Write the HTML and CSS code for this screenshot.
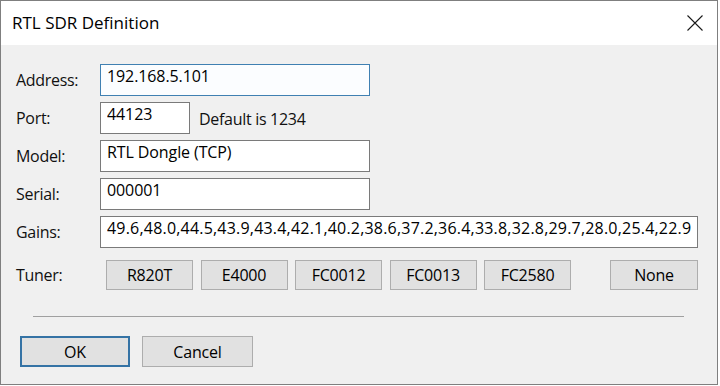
FILE: index.html
```html
<!DOCTYPE html>
<html lang="en">
<head>
    <meta charset="UTF-8">
    <title>RTL SDR Definition</title>
    <link rel="stylesheet" href="styles.css">
</head>
<body>
    <!-- Dialog window -->
    <div class="dialog">
        <div class="titlebar">
            <span class="title">RTL SDR Definition</span>
            <button class="close" aria-label="Close">
                <svg width="16" height="16" viewBox="0 0 16 16">
                    <path d="M0.5 0.5 L15.5 15.5 M15.5 0.5 L0.5 15.5" stroke="#1a1a1a" stroke-width="1.1" fill="none"/>
                </svg>
            </button>
        </div>

        <div class="dialog-body">
            <form class="fields" onsubmit="return false">
                <label class="field-label" for="address">Address:</label>
                <div class="field"><input id="address" class="edit edit-wide edit-focus" value="192.168.5.101"></div>

                <label class="field-label" for="port">Port:</label>
                <div class="field">
                    <input id="port" class="edit edit-port" value="44123">
                    <span class="hint">Default is 1234</span>
                </div>

                <label class="field-label" for="model">Model:</label>
                <div class="field"><input id="model" class="edit edit-wide" value="RTL Dongle (TCP)"></div>

                <label class="field-label" for="serial">Serial:</label>
                <div class="field"><input id="serial" class="edit edit-wide" value="000001"></div>

                <label class="field-label" for="gains">Gains:</label>
                <div class="field"><input id="gains" class="edit edit-full" value="49.6,48.0,44.5,43.9,43.4,42.1,40.2,38.6,37.2,36.4,33.8,32.8,29.7,28.0,25.4,22.9,20.7,19.7,16.6,15.7,14.4,12.5,8.7,7.7,3.7,2.7,1.4,0.9,0.0"></div>

                <span class="field-label tuner-label">Tuner:</span>
                <div class="tuners">
                    <button class="btn tuner-btn">R820T</button>
                    <button class="btn tuner-btn">E4000</button>
                    <button class="btn tuner-btn">FC0012</button>
                    <button class="btn tuner-btn">FC0013</button>
                    <button class="btn tuner-btn">FC2580</button>
                    <button class="btn tuner-btn tuner-none">None</button>
                </div>
            </form>

            <hr class="separator">

            <div class="actions">
                <button class="btn action-btn btn-default">OK</button>
                <button class="btn action-btn">Cancel</button>
            </div>
        </div>
    </div>
</body>
</html>
```

FILE: styles.css
```css
/* Page */
body {
    margin: 0;
    background-color: #ffffff;
    font-family: 'Open Sans', sans-serif;
    font-size: 16px;
    letter-spacing: -0.3px;
    color: #000;
}

/* Dialog window */
.dialog {
    width: 718px;
    height: 385px;
    box-sizing: border-box;
    border: 1px solid #7f7f7f;
    background-color: #f0f0f0;
    display: flex;
    flex-direction: column;
}

.titlebar {
    height: 44px;
    background-color: #ffffff;
    display: flex;
    align-items: center;
    justify-content: space-between;
    padding: 0 14px 0 11px;
}

.title {
    font-size: 17px;
    line-height: 44px;
    letter-spacing: 0;
    color: #000;
}

.close {
    border: none;
    background: none;
    padding: 0;
    width: 16px;
    height: 16px;
    margin-top: -1px;
}

.close svg {
    display: block;
}

.dialog-body {
    padding: 19px 19px 18px 15px;
}

/* Form fields */
.fields {
    display: grid;
    grid-template-columns: 84px 1fr;
    row-gap: 6px;
    margin: 0;
}

.field-label {
    display: flex;
    align-items: center;
    color: #111;
}

.field {
    display: flex;
    align-items: center;
    gap: 9px;
    height: 32px;
}

.edit {
    box-sizing: border-box;
    height: 32px;
    padding: 0 6px 9px 6px;
    border: 1px solid #7a7a7a;
    background-color: #ffffff;
    font-family: inherit;
    font-size: 16px;
    line-height: 20px;
    letter-spacing: -0.1px;
    color: #000;
    outline: none;
}

.edit-wide {
    width: 270px;
}

.edit-full {
    width: 100%;
    letter-spacing: 0.2px;
}

.edit-port {
    width: 90px;
}

.edit-focus {
    border-color: #3f80b2;
    background-color: #fbfdff;
}

.hint {
    color: #111;
    padding-top: 1px;
}

/* Buttons */
.btn {
    box-sizing: border-box;
    height: 30px;
    border: 1px solid #adadad;
    background-color: #e1e1e1;
    font-family: inherit;
    font-size: 16px;
    letter-spacing: -0.2px;
    color: #000;
    padding: 0;
}

.tuner-label {
    margin-top: 6px;
}

.tuners {
    display: flex;
    gap: 7.5px;
    margin: 6px 0 0 6px;
}

.tuner-btn {
    width: 87px;
}

.tuner-none {
    margin-left: auto;
    width: 88px;
}

.separator {
    border: none;
    border-top: 1px solid #a0a0a0;
    margin: 26px 14px 0 17px;
    height: 0;
}

.actions {
    display: flex;
    gap: 12px;
    margin: 19px 0 0 4px;
}

.action-btn {
    width: 111px;
    height: 31px;
}

.btn-default {
    width: 110px;
    border: 2px solid #3573a5;
}
```
